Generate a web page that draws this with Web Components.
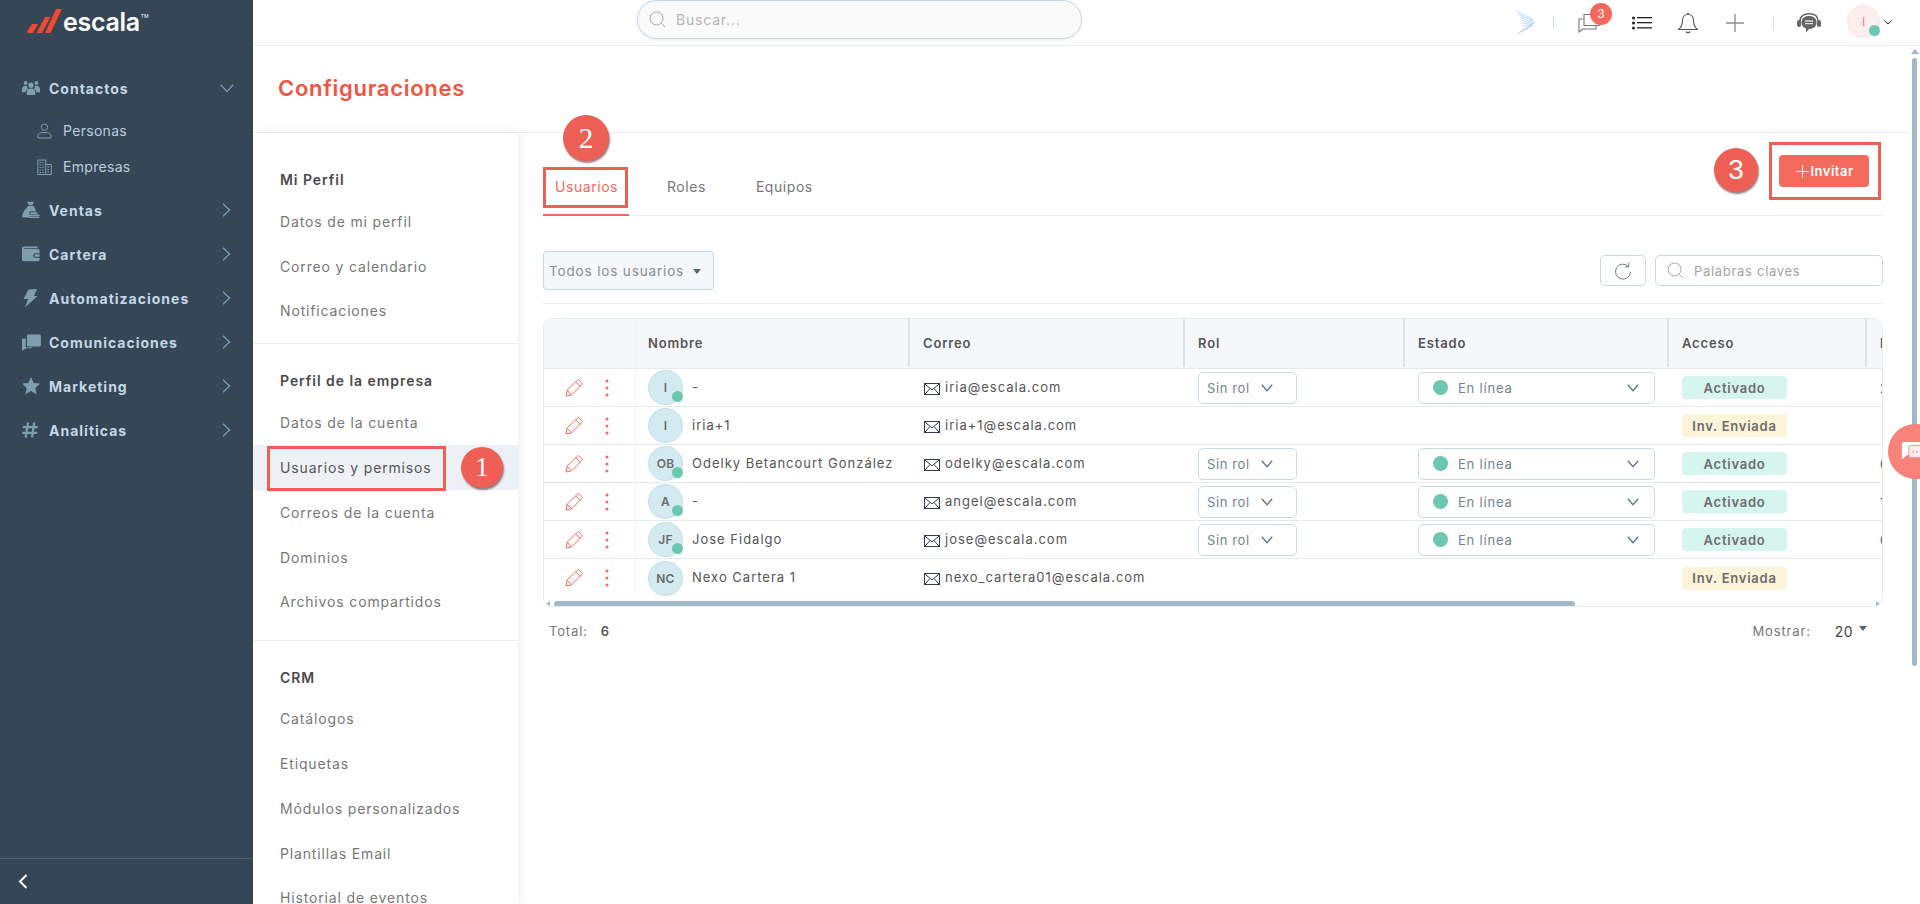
<!DOCTYPE html>
<html lang="es">
<head>
<meta charset="utf-8">
<title>Configuraciones</title>
<style>
html,body{margin:0;padding:0;height:904px;overflow:hidden;background:#fff;font-family:Inter,"Noto Sans",sans-serif;}
</style>
</head>
<body>
<app-shell>
  <side-nav slot="nav">
    <nav-item icon="users" label="Contactos" open></nav-item>
    <nav-sub icon="person" label="Personas" style="margin-top:2px"></nav-sub>
    <nav-sub icon="building" label="Empresas" style="margin-top:-1px;margin-bottom:3px"></nav-sub>
    <nav-item icon="bag" label="Ventas"></nav-item>
    <nav-item icon="wallet" label="Cartera"></nav-item>
    <nav-item icon="bolt" label="Automatizaciones"></nav-item>
    <nav-item icon="comments" label="Comunicaciones"></nav-item>
    <nav-item icon="star" label="Marketing"></nav-item>
    <nav-item icon="hash" label="Analíticas"></nav-item>
  </side-nav>
  <top-bar slot="top"></top-bar>
  <settings-menu slot="menu">
    <menu-section title="Mi Perfil" style="--pt:26px;--pb:10px">
      <menu-link>Datos de mi perfil</menu-link>
      <menu-link>Correo y calendario</menu-link>
      <menu-link>Notificaciones</menu-link>
    </menu-section>
    <menu-section title="Perfil de la empresa" style="--pt:16px;--pb:16px">
      <menu-link>Datos de la cuenta</menu-link>
      <menu-link active>Usuarios y permisos<anno-box style="left:14px;top:1px;width:179px;height:45px"></anno-box><anno-mark style="left:208px;top:2px;width:42px;height:41px;font-size:27px">1</anno-mark></menu-link>
      <menu-link>Correos de la cuenta</menu-link>
      <menu-link>Dominios</menu-link>
      <menu-link>Archivos compartidos</menu-link>
    </menu-section>
    <menu-section title="CRM" style="--pt:15px;--pb:0px" last>
      <menu-link>Catálogos</menu-link>
      <menu-link>Etiquetas</menu-link>
      <menu-link>Módulos personalizados</menu-link>
      <menu-link>Plantillas Email</menu-link>
      <menu-link>Historial de eventos</menu-link>
    </menu-section>
  </settings-menu>
  <users-panel slot="content">
    <user-row initials="I" online name="-" mail="iria@escala.com" rol estado badge="Activado" extra="2"></user-row>
    <user-row initials="I" name="iria+1" mail="iria+1@escala.com" badge="Inv. Enviada" invited></user-row>
    <user-row initials="OB" online name="Odelky Betancourt González" mail="odelky@escala.com" rol estado badge="Activado" extra="0"></user-row>
    <user-row initials="A" online name="-" mail="angel@escala.com" rol estado badge="Activado" extra="1"></user-row>
    <user-row initials="JF" online name="Jose Fidalgo" mail="jose@escala.com" rol estado badge="Activado" extra="0"></user-row>
    <user-row initials="NC" name="Nexo Cartera 1" mail="nexo_cartera01@escala.com" badge="Inv. Enviada" invited></user-row>
  </users-panel>
</app-shell>

<script>
const ICONS = {
  users:`<svg width="18" height="16" viewBox="0 0 18 16" fill="#7f9fae"><circle cx="9" cy="5.2" r="2.7"/><circle cx="3.6" cy="3" r="1.9"/><circle cx="14.4" cy="3" r="1.9"/><path d="M4.8 15v-3.2C4.8 9.6 6.4 8.6 9 8.6s4.200 1 4.200 3.200V15z"/><path d="M0 9.500C0 7 1.500 5.700 3.500 5.700c.6 0 1.100.1 1.600.4-.2 1.300.3 2.200 1 2.800-1.700.6-2.500 1.700-2.500 3.300H0zM18 9.500C18 7 16.500 5.700 14.500 5.700c-.6 0-1.100.1-1.600.4.2 1.300-.3 2.200-1 2.800 1.700.6 2.500 1.700 2.500 3.300H18z"/></svg>`,
  person:`<svg width="15" height="16" viewBox="0 0 15 16" fill="none" stroke="#7f9fae" stroke-width="1"><circle cx="7.500" cy="4.200" r="3.200"/><path d="M1 15v-1.500C1 10.500 3 9.500 7.500 9.500s6.500 1 6.500 4V15z"/></svg>`,
  building:`<svg width="15" height="16" viewBox="0 0 15 16" fill="none" stroke="#7f9fae" stroke-width="1"><path d="M.8 15.500V1h8v14.500M8.800 5.500h5.500v10M.3 15.500h14.500"/><path stroke-dasharray="1.500 1.200" d="M2.500 3.500h4.500M2.500 6h4.500M2.500 8.500h4.500M2.500 11h4.500M2.500 13.500h4.500M10.500 8h2.500M10.500 10.500h2.500M10.500 13h2.500"/></svg>`,
  bag:`<svg width="18" height="18" viewBox="0 0 18 18" fill="#7f9fae"><path d="M5 .8h7L10.500 4h-3.700z"/><path d="M6.500 4.800h4.800c1.300 1.900 2.500 3.700 3 5.700H7.500v6H1.500C.4 16.500 0 15.600 .2 14.500 .8 10.800 4 7.500 6.500 4.800z"/><rect x="8.500" y="11.300" width="7" height="1.600" rx=".5"/><rect x="6.500" y="13.500" width="11" height="1.500" rx=".5"/><rect x="6.500" y="15.600" width="11" height="1.500" rx=".5"/></svg>`,
  wallet:`<svg width="18" height="16" viewBox="0 0 18 16" fill="#7f9fae"><path d="M2 .5h13.500v1.800H2.500c-.6 0-.6.700 0 .7H16c1 0 1.600.6 1.600 1.500V7.200h-4a2.300 2.300 0 0 0 0 4.600h4v2c0 .9-.6 1.500-1.500 1.500H2c-1.100 0-2-.9-2-2V2.500c0-1.100.9-2 2-2z"/><path d="M13.700 8.300h3.900v2.400h-3.900a1.200 1.200 0 0 1 0-2.400z"/></svg>`,
  bolt:`<svg width="16" height="19" viewBox="0 0 16 19" fill="#7f9fae"><path d="M6.500.5 15 0l-3 7h3.500L3 18.500l3-8.500H1.500z"/></svg>`,
  comments:`<svg width="19" height="17" viewBox="0 0 19 17" fill="#7f9fae"><path d="M6 .5h11.500c.8 0 1.400.6 1.400 1.400v9.200c0 .8-.6 1.400-1.400 1.400H8.500L5 12V2c0-.8.2-1.500 1-1.500z"/><path d="M0 5.500c0-.6.400-1 1-1h2.800v8.800h6.500c-.2.600-.6 1-1.300 1H4.500L0 16.800z"/></svg>`,
  star:`<svg width="18" height="18" viewBox="0 0 18 18" fill="#7f9fae"><path d="m9 0 2.700 5.900 6.300.7-4.700 4.300 1.300 6.300L9 14.100 3.400 17.200l1.300-6.300L0 6.600l6.300-.7z"/></svg>`,
  hash:`<svg width="16" height="16" viewBox="0 0 16 16" fill="none" stroke="#7f9fae" stroke-width="2.200"><path d="M6 .5 3.700 15.500M12.300.5 10 15.500M.8 5.200h15M.2 10.800h15"/></svg>`,
  mail:`<svg width="16" height="12" viewBox="0 0 16 12" fill="none" stroke="#333d4d" stroke-width="1"><rect x=".5" y=".5" width="15" height="11"/><path d="m.5.800 7.500 6 7.500-6M.8 11.300 6 5.500M15.200 11.300 10 5.500"/></svg>`,
  pencil:`<svg width="18" height="18" viewBox="0 0 18 18" fill="none" stroke="#f4695c" stroke-width="1" stroke-linejoin="round"><path d="M1 17 2 11.300 12.300 1.200c.6-.6 1.400-.6 2 0l2.400 2.400c.6.6.6 1.400 0 2L6.700 15.800zM2 11.300l4.700 4.500M10.700 2.900l4.400 4.400"/></svg>`,
  kebab:`<svg width="4" height="18" viewBox="0 0 4 18" fill="#f4695c"><circle cx="2" cy="2" r="1.500"/><circle cx="2" cy="9" r="1.500"/><circle cx="2" cy="16" r="1.500"/></svg>`,
  search:`<svg width="17" height="17" viewBox="0 0 17 17" fill="none" stroke="#aaa" stroke-width="1"><circle cx="7.500" cy="7.500" r="6.500"/><path d="m12.500 12.500 3.500 3.500"/></svg>`,
  chev:`<svg width="12" height="8" viewBox="0 0 12 8" fill="none" stroke="#5f7585" stroke-width="1.300"><path d="m.8.800 5.200 6 5.200-6"/></svg>`
};
function def(name, cls){customElements.define(name, cls);}
function shadow(el, html){el.attachShadow({mode:'open'}).innerHTML = html;}

def('app-shell', class extends HTMLElement{constructor(){super();shadow(this,`<style>
:host{display:grid;grid-template-columns:253px 1fr;height:904px;width:1920px;overflow:hidden;position:relative;color:#666;}
.nav{grid-row:1;grid-column:1;min-height:0;display:flex}
.main{grid-row:1;grid-column:2;display:flex;flex-direction:column;min-width:0;height:904px}
.scroller{flex:1;display:grid;grid-template-columns:1fr 10px;min-height:0}
.page{display:flex;flex-direction:column;min-width:0;min-height:0}
.head{height:86px;border-bottom:1px solid #e8eef0;display:flex;align-items:center;padding-left:25px;box-sizing:content-box;flex:none}
h1{margin:0;font:600 22px Inter,sans-serif;letter-spacing:.7px;color:#f1543f;position:relative;top:-1px}
.body{flex:1;display:flex;min-height:0}
.bar{background:#fff;position:relative;display:flex;flex-direction:column;align-items:center;padding-left:0}
.up{width:0;height:0;border:4px solid transparent;border-top:0;border-bottom:5px solid #a0b8c6;margin-top:3px;margin-left:-1px}
.th{width:5px;height:608px;background:#a0b8c6;border-radius:3px;margin-top:4px;margin-left:-1px}
.chat{position:absolute;left:1888px;top:424px;width:55px;height:55px;border-radius:50%;background:#f8837a;overflow:hidden}
.chat svg{position:absolute;left:13px;top:16px}
</style>
<div class="nav"><slot name="nav"></slot></div>
<div class="main"><slot name="top"></slot>
<div class="scroller"><div class="page"><div class="head"><h1>Configuraciones</h1></div><div class="body"><slot name="menu"></slot><slot name="content"></slot></div></div>
<div class="bar"><div class="up"></div><div class="th"></div></div></div></div>
<div class="chat"><svg width="28" height="23" viewBox="0 0 32 26"><path d="M3 2h19a2 2 0 0 1 2 2v11a2 2 0 0 1-2 2H7l-6 5V4a2 2 0 0 1 2-2z" fill="#fff"/><rect x="9" y="6" width="22" height="14" rx="2" fill="#fdeeee" stroke="#f8837a"/><circle cx="14" cy="13" r="1" fill="#f8837a"/><circle cx="18" cy="13" r="1" fill="#f8837a"/></svg></div>`);}});

def('side-nav', class extends HTMLElement{constructor(){super();shadow(this,`<style>
:host{display:flex;flex-direction:column;width:253px;height:904px;background:#354657;}
.logo{height:66px;display:flex;align-items:flex-start;padding:9px 0 0 27px;box-sizing:border-box;flex:none}
.word{font:600 25px/26px Inter,sans-serif;color:#fff;letter-spacing:-.3px;margin-left:1px;position:relative;top:0}
sup{font-size:5px;font-weight:400;vertical-align:top;line-height:14px;letter-spacing:0;margin-left:1px}
.list{flex:1}
.foot{height:45px;border-top:1px solid #4e6072;display:flex;align-items:center;padding-left:18px;flex:none}
</style>
<div class="logo"><svg width="35" height="24" viewBox="0 0 35 24" fill="#f1492f"><path d="M5 15h6L6 24H1.500Q-.500 24 .300 22z"/><path d="M18 8h5.500L15 24H9.500z"/><path d="M29 0h6L23.500 24H18z"/></svg><span class="word">escala<sup>TM</sup></span></div>
<div class="list"><slot></slot></div>
<div class="foot"><svg width="10" height="15" viewBox="0 0 10 15" fill="none" stroke="#fff" stroke-width="2"><path d="M8.500 1 2 7.500 8.500 14"/></svg></div>`);}});

def('nav-item', class extends HTMLElement{constructor(){super();const open=this.hasAttribute('open');shadow(this,`<style>
:host{display:flex;align-items:center;height:44px;padding-left:22px;color:#c3d7e5;font:700 14px Inter,sans-serif;letter-spacing:1px}
.i{width:27px;display:flex;align-items:center}
.t{flex:1}
.c{width:33px;display:flex}
</style><span class="i">${ICONS[this.getAttribute('icon')]}</span><span class="t">${this.getAttribute('label')}</span>
<span class="c">${open?'<svg width="14" height="9" viewBox="0 0 14 9" fill="none" stroke="#7f9fae" stroke-width="1.300"><path d="m.8.800 6.200 6.800L13.200.800"/></svg>':'<svg width="9" height="14" viewBox="0 0 9 14" fill="none" stroke="#7f9fae" stroke-width="1.300" style="margin-left:2px"><path d="m1 .8 6.500 6.200L1 13.200"/></svg>'}</span>`);}});

def('nav-sub', class extends HTMLElement{constructor(){super();shadow(this,`<style>
:host{display:flex;align-items:center;height:37px;padding-left:37px;color:#b9cedc;font:400 14px Inter,sans-serif;letter-spacing:.3px}
.i{width:26px;display:flex}
</style><span class="i">${ICONS[this.getAttribute('icon')]}</span><span>${this.getAttribute('label')}</span>`);}});

def('top-bar', class extends HTMLElement{constructor(){super();shadow(this,`<style>
:host{display:flex;align-items:center;height:46px;box-sizing:border-box;border-bottom:1px solid #e3ecee;flex:none;position:relative;background:#fff}
.search{margin-left:384px;width:445px;height:39px;box-sizing:border-box;border:1px solid #c4d7e6;border-radius:20px;background:#fafafa;box-shadow:0 1px 3px rgba(0,0,0,.08);display:flex;align-items:center;padding-left:11px;gap:10px;color:#b4b4b4;font:400 14px Inter,sans-serif;letter-spacing:.8px;position:relative;top:-3px}
.tools{display:flex;align-items:center;margin-left:auto;height:45px;position:relative;width:405px}
.sep{width:1px;height:13px;background:#e9d6d2;flex:none}
.icon{display:flex;flex:none;position:relative}
.badge{position:absolute;left:12px;top:-10px;width:22px;height:22px;border-radius:50%;background:#f4695c;color:#fff;font:400 12px/22px Inter,sans-serif;text-align:center}
.av{width:33px;height:33px;border-radius:50%;background:#fdeeee;border:1px solid #fbe3e1;box-sizing:border-box;display:flex;align-items:center;justify-content:center;color:#ef6fa0;font:400 12px Inter,sans-serif;position:relative;flex:none}
.dot{position:absolute;right:-1px;bottom:1px;width:11px;height:11px;border-radius:50%;background:#6cc7b0}
</style>
<div class="search">${ICONS.search}<span>Buscar...</span></div>
<div class="tools">
<span class="icon" style="margin-left:0"><svg width="20" height="24" viewBox="0 0 20 24" fill="none" stroke="#bcd3f7" stroke-width=".9"><path d="M1 0 17 8 20 12M3 3 18 10M5 6 19 12 12 17M6 9l12 4-8 5M7 12l11 2-12 6M8 15l8 0-11 6M5 21l8-4-11 6" /></svg></span>
<span class="sep" style="margin-left:18px"></span>
<span class="icon" style="margin-left:24px"><svg width="24" height="20" viewBox="0 0 24 20" fill="none" stroke="#777" stroke-width="1.100"><path d="M5 6H1v13l4-3h13v-3"/><path d="M6 1.500h15v11H6z"/></svg><span class="badge">3</span></span>
<span class="icon" style="margin-left:30px"><svg width="20" height="14" viewBox="0 0 20 14" fill="#222"><circle cx="1.500" cy="2" r="1.500"/><circle cx="1.500" cy="7" r="1.500"/><circle cx="1.500" cy="12" r="1.500"/><rect x="5" y="1" width="15" height="1.300"/><rect x="5" y="6" width="15" height="1.300"/><rect x="5" y="11.200" width="15" height="1.300"/></svg></span>
<span class="icon" style="margin-left:26px"><svg width="20" height="22" viewBox="0 0 20 22" fill="none" stroke="#555" stroke-width="1.100"><path d="M10 2.500C6.200 2.500 4.500 5.500 4.500 8.500c0 4-1.500 7-4 9h19c-2.500-2-4-5-4-9 0-3-1.700-6-5.500-6z"/><path d="M9 1.200h2M8 19.500c.5 1.500 3.500 1.500 4 0" /></svg></span>
<span class="icon" style="margin-left:28px"><svg width="18" height="18" viewBox="0 0 18 18" fill="none" stroke="#8a8a8a" stroke-width="1.300"><path d="M9 0v18M0 9h18"/></svg></span>
<span class="sep" style="margin-left:29px"></span>
<span class="icon" style="margin-left:23px"><svg width="24" height="20" viewBox="0 0 24 20"><path d="M3 8C3 3 7 .8 12 .8S21 3 21 8" fill="none" stroke="#666" stroke-width="1.500"/><rect x="0" y="7" width="4" height="7" rx="2" fill="#666"/><rect x="20" y="7" width="4" height="7" rx="2" fill="#666"/><path d="M12 3c4.500 0 7.500 2.500 7.500 6.500S16.500 16 12 16l-3 3.500V15.500C6 14.500 4.500 12.500 4.500 9.500 4.500 5.500 7.500 3 12 3z" fill="#666"/><path d="M8 8h8M8 10.700h8" stroke="#ddd" stroke-width="1.300"/></svg></span>
<span class="av" style="margin-left:26px;top:-1px">I<span class="dot"></span></span>
<span class="icon" style="margin-left:4px"><svg width="8" height="5" viewBox="0 0 8 5" fill="none" stroke="#222" stroke-width="1"><path d="m.5.500 3.500 3.500L7.500.500"/></svg></span>
</div>`);}});

def('settings-menu', class extends HTMLElement{constructor(){super();shadow(this,`<style>
:host{display:block;width:265px;flex:none;box-shadow:2px 0 10px rgba(0,0,0,.07);border-top:0;background:#fff;position:relative;overflow:hidden;z-index:1}
</style><slot></slot>`);}});

def('menu-section', class extends HTMLElement{constructor(){super();shadow(this,`<style>
:host{display:block;padding:var(--pt) 0 var(--pb);border-bottom:1px solid #eceff1}
:host([last]){border-bottom:0}
:host([last]) .t{padding-top:2px;box-sizing:border-box}
.t{height:40px;display:flex;align-items:center;padding-left:27px;font:600 14px Inter,sans-serif;letter-spacing:.95px;color:#4a4a4a}
</style><div class="t">${this.getAttribute('title')}</div><slot></slot>`);}});

def('menu-link', class extends HTMLElement{constructor(){super();shadow(this,`<style>
:host{display:flex;align-items:center;height:44.800px;padding-left:27px;font:400 14px Inter,sans-serif;letter-spacing:.85px;color:#777;position:relative}
:host([active]){background:#edf1f5;color:#555}
</style><slot></slot>`);}});

def('anno-box', class extends HTMLElement{constructor(){super();shadow(this,`<style>
:host{display:block;position:absolute;box-sizing:border-box;border:3px solid #ee6055;pointer-events:none}
</style>`);}});
def('anno-mark', class extends HTMLElement{constructor(){super();shadow(this,`<style>
:host{display:flex;align-items:center;justify-content:center;position:absolute;border-radius:50%;background:#ee5f55;color:#fff;font-family:"Liberation Serif",serif;letter-spacing:0;box-shadow:1px 2px 2px rgba(60,20,20,.55);z-index:3}
</style><slot></slot>`);}});

def('users-panel', class extends HTMLElement{constructor(){super();shadow(this,`<style>
:host{display:block;flex:1;min-width:0;padding:0 27px 0 25px;position:relative;--cols:92px 274px 275px 220px 264px 198px 16px;}
.tabs{height:83px;box-sizing:border-box;border-bottom:1px solid #e8eef0;display:flex;align-items:flex-end;font:400 14px Inter,sans-serif;letter-spacing:.55px;color:#777;position:relative}
.tab{height:40px;line-height:24px;padding:0 12px;flex:none}
.tab.on{color:#f4695c;width:86px;box-sizing:border-box;border-bottom:2px solid #f4695c;margin-bottom:-1px;position:relative;line-height:22px;padding-bottom:0}
.tab.r{margin-left:26px}
.tab.e{margin-left:26px}
.inv{margin-left:auto;margin-right:14px;margin-bottom:28px;width:90px;height:32px;background:#f46a5c;border-radius:4px;color:#fff;font:600 13px Inter,sans-serif;letter-spacing:.5px;display:flex;align-items:center;justify-content:center;gap:1px;padding-left:2px;box-sizing:border-box;position:relative}
.tool{display:flex;align-items:flex-start;padding-top:35px;height:88px;box-sizing:border-box;border-bottom:1px solid #e8eef0}
.sel{width:171px;height:39px;box-sizing:border-box;border:1px solid #c6d8e4;border-radius:4px;background:#f4f8fb;display:flex;align-items:center;padding-left:5px;gap:9px;font:400 13.500px Inter,sans-serif;letter-spacing:.85px;color:#8d8d8d}
.tri{width:0;height:0;border:4px solid transparent;border-top:5px solid #4f6779;border-bottom:0;margin-top:2px}
.rf{margin:4px 0 0 auto;width:46px;height:31px;box-sizing:border-box;border:1px solid #c9dae5;border-radius:5px;display:flex;align-items:center;justify-content:center}
.kw{margin:4px 0 0 9px;width:228px;height:31px;box-sizing:border-box;border:1px solid #c9dae5;border-radius:5px;display:flex;align-items:center;padding-left:11px;gap:10px;font:400 13px Inter,sans-serif;letter-spacing:.7px;color:#a4a4a4}
.table{margin-top:14px;border:1px solid #e5edf0;border-radius:9px;overflow:hidden;height:289px;box-sizing:border-box;display:flex;flex-direction:column}
.hd{display:grid;grid-template-columns:var(--cols);height:50px;background:#f4f8fb;border-bottom:1px solid #e3ebef;flex:none;box-sizing:border-box;font:600 13px Inter,sans-serif;letter-spacing:.85px;color:#555}
.hd span{display:flex;align-items:center;padding-left:13px;border-right:2px solid #dde2e5;box-sizing:border-box;overflow:hidden;white-space:nowrap;position:relative;top:-1px}
.hd span:first-child{border-right:1px solid #eff3f6}
.hd span:nth-child(2){padding-left:12px}
.hd span:last-child{border:0;}
.sb{flex:none;height:10px;display:flex;align-items:center;padding:0 2px;gap:2px;margin-top:2px}
.ar{width:0;height:0;border:3px solid transparent;flex:none}
.ar.l{border-left:0;border-right:4px solid #9fb8c6}
.ar.r{border-right:0;border-left:4px solid #9fb8c6;margin-left:auto}
.tb{width:1021px;height:6px;border-radius:3px;background:#a0b8c6;margin-left:2px}
.foot{display:flex;align-items:center;height:48px;font:400 13px Inter,sans-serif;letter-spacing:.85px;color:#777;padding-left:6px}
.foot b{font-weight:600;color:#555;margin-left:13px}
.foot .m{margin-left:auto}
.foot .n{color:#444;margin-left:24px;font-size:14px;letter-spacing:.4px}
.foot .car{width:0;height:0;border:4px solid transparent;border-top:5px solid #4f6779;border-bottom:0;margin:0 16px 6px 6px}
</style>
<div class="tabs">
<div class="tab on">Usuarios</div><div class="tab r">Roles</div><div class="tab e">Equipos</div>
<anno-box style="left:0;top:34px;width:85px;height:41px"></anno-box>
<anno-mark style="left:20px;top:-18px;width:46px;height:46px;font-size:29px">2</anno-mark>
<div class="inv"><svg width="13" height="13" viewBox="0 0 13 13" fill="none" stroke="#fff" stroke-width="1"><path d="M6.500 0v13M0 6.500h13"/></svg>Invitar</div>
<anno-box style="left:1226px;top:9px;width:112px;height:58px"></anno-box>
<anno-mark style="left:1171px;top:15px;width:44px;height:44px;font-size:28px;font-family:'Liberation Sans',sans-serif">3</anno-mark>
</div>
<div class="tool">
<div class="sel"><span>Todos los usuarios</span><span class="tri"></span></div>
<div class="rf"><svg width="18" height="18" viewBox="0 0 18 18" fill="none" stroke="#6d7f8b" stroke-width="1"><path d="M14.500 4.500A7.500 7.500 0 1 0 16.500 10"/><path d="M14.800 .8v4h-4"/></svg></div>
<div class="kw">${ICONS.search}<span>Palabras claves</span></div>
</div>
<div class="table">
<div class="hd"><span></span><span>Nombre</span><span>Correo</span><span>Rol</span><span>Estado</span><span>Acceso</span><span>Fecha</span></div>
<slot></slot>
<div class="sb"><span class="ar l"></span><span class="tb"></span><span class="ar r"></span></div>
</div>
<div class="foot"><span>Total:</span><b>6</b><span class="m">Mostrar:</span><span class="n">20</span><span class="car"></span></div>`);}});

def('user-row', class extends HTMLElement{constructor(){super();const a=n=>this.getAttribute(n),h=n=>this.hasAttribute(n);shadow(this,`<style>
:host{display:grid;grid-template-columns:var(--cols);height:38px;box-sizing:border-box;border-bottom:1px solid #e5eaed;font:400 13px Inter,sans-serif;letter-spacing:1px;color:#555;flex:none}
:host(:last-of-type){border-bottom:0}
.c{display:flex;align-items:center;overflow:hidden;white-space:nowrap;min-width:0}
.act{padding-left:21px;gap:22px;border-right:1px solid #f3f6f8;box-sizing:border-box}
.nm{padding-left:12px}
.nm .t{margin-left:9px;position:relative;top:-1px}
.av{width:35px;height:35px;box-sizing:border-box;border-radius:50%;background:#d3ebf0;border:1px solid #c2dee5;color:#6a6a6a;display:flex;align-items:center;justify-content:center;font:600 12px Inter,sans-serif;letter-spacing:.2px;position:relative;flex:none}
.av i{position:absolute;right:-1px;bottom:2px;width:11px;height:11px;border-radius:50%;background:#6cc7b0}
.ml{padding-left:14px;gap:5px}
.ml span{position:relative;top:-1px}
.ml svg{position:relative;top:1px}
.rs{padding-left:13px}
.box{height:32px;box-sizing:border-box;border:1px solid #c8dbe6;border-radius:5px;background:#fff;display:flex;align-items:center;color:#6f8391;letter-spacing:.6px}
.rol{width:99px;padding-left:8px;gap:11px}
.est{width:237px;padding-left:14px;color:#6f8391;letter-spacing:.8px}
.est i{width:15px;height:15px;border-radius:50%;background:#6cc7b0;margin-right:10px;flex:none}
.est svg{margin-left:auto;margin-right:15px}
.bd{margin-left:13px;width:105px;height:23px;border-radius:4px;display:flex;align-items:center;justify-content:center;font:600 13px Inter,sans-serif;letter-spacing:.75px;color:#6c6c6c;background:#d5f5ee}
.inv .bd,.bd.i{background:#fdf3d8}
.ex{padding-left:13px}
</style>
<div class="c act">${ICONS.pencil}${ICONS.kebab}</div>
<div class="c nm"><span class="av">${a('initials')}${h('online')?'<i></i>':''}</span><span class="t">${a('name')}</span></div>
<div class="c ml">${ICONS.mail}<span>${a('mail')}</span></div>
<div class="c rs">${h('rol')?`<div class="box rol"><span>Sin rol</span>${ICONS.chev}</div>`:''}</div>
<div class="c rs">${h('estado')?`<div class="box est"><i></i><span>En línea</span>${ICONS.chev}</div>`:''}</div>
<div class="c"><span class="bd${h('invited')?' i':''}">${a('badge')}</span></div>
<div class="c ex">${a('extra')||''}</div>`);}});
</script>
</body>
</html>
